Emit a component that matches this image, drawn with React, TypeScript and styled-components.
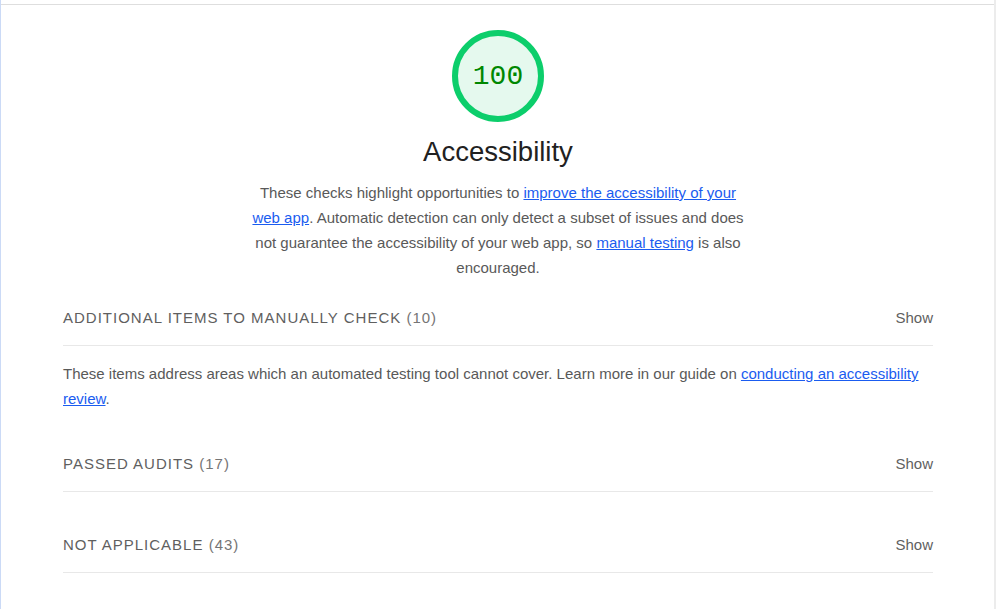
import React from 'react';
import styled, { createGlobalStyle } from 'styled-components';

const GlobalStyle = createGlobalStyle`
  html, body {
    margin: 0;
    padding: 0;
    background: #ffffff;
  }
  body {
    font-family: "Liberation Sans", Arial, sans-serif;
  }
`;

const Frame = styled.div`
  min-height: 100vh;
  box-sizing: border-box;
  border-left: 1px solid #cbdaf6;
  border-right: 2px solid #ececec;
  padding-top: 4px;
`;

const Sheet = styled.div`
  border-top: 1px solid #dedede;
  padding: 0 61px 40px 62px;
`;

const Header = styled.div`
  display: flex;
  flex-direction: column;
  align-items: center;
`;

const Gauge = styled.div`
  width: 92px;
  height: 92px;
  box-sizing: border-box;
  margin-top: 25px;
  border-radius: 50%;
  border: 6px solid #0cce6b;
  background: #e5f9ee;
  display: flex;
  align-items: center;
  justify-content: center;
  font-family: "Liberation Mono", "DejaVu Sans Mono", monospace;
  font-size: 28px;
  color: #008800;
`;

const Title = styled.h1`
  margin: 12px 0 0;
  font-size: 27.5px;
  line-height: 36px;
  font-weight: 400;
  color: #212121;
`;

const Intro = styled.p`
  margin: 10px 0 0;
  max-width: 500px;
  text-align: center;
  font-size: 15px;
  line-height: 25px;
  color: #595959;
`;

const Link = styled.a`
  color: #1a5cf0;
  text-decoration: underline;
`;

const Group = styled.section`
  & + & {
    margin-top: 15px;
  }
`;

const GroupRow = styled.div`
  display: flex;
  align-items: center;
  justify-content: space-between;
  padding: 26px 0 15px;
  border-bottom: 1px solid #e8e8e8;
  font-size: 15px;
  line-height: 24px;
  color: #5f5f5f;
`;

const GroupTitle = styled.span`
  text-transform: uppercase;
  letter-spacing: 1px;
`;

const Count = styled.span`
  color: #757575;
`;

const Toggle = styled.span`
  font-size: 15px;
  color: #5f5f5f;
`;

const GroupDesc = styled.p`
  margin: 15px 0 0;
  font-size: 15px;
  line-height: 25px;
  color: #595959;
`;

const groups = [
  {
    title: 'Additional items to manually check',
    count: 10,
    desc: (
      <>
        These items address areas which an automated testing tool cannot cover. Learn more in our guide on{' '}
        <Link href="#">conducting an accessibility review</Link>.
      </>
    ),
  },
  { title: 'Passed audits', count: 17 },
  { title: 'Not applicable', count: 43 },
];

export default function App() {
  return (
    <Frame>
      <GlobalStyle />
      <Sheet>
        <Header>
          <Gauge>100</Gauge>
          <Title>Accessibility</Title>
          <Intro>
            These checks highlight opportunities to{' '}
            <Link href="#">improve the accessibility of your web app</Link>. Automatic detection can only detect a
            subset of issues and does not guarantee the accessibility of your web app, so{' '}
            <Link href="#">manual testing</Link> is also encouraged.
          </Intro>
        </Header>
        {groups.map((g) => (
          <Group key={g.title}>
            <GroupRow>
              <GroupTitle>
                {g.title} <Count>({g.count})</Count>
              </GroupTitle>
              <Toggle>Show</Toggle>
            </GroupRow>
            {g.desc && <GroupDesc>{g.desc}</GroupDesc>}
          </Group>
        ))}
      </Sheet>
    </Frame>
  );
}
